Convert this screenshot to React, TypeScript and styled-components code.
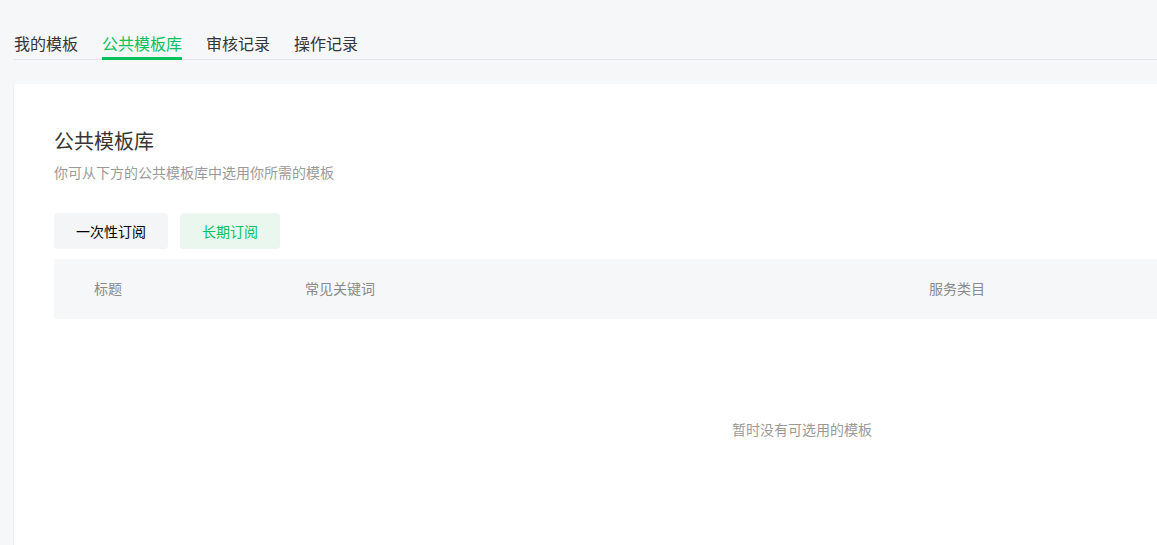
import React, { useState } from "react";
import styled, { createGlobalStyle } from "styled-components";

const GlobalStyle = createGlobalStyle`
  html, body {
    margin: 0;
    padding: 0;
    background: #f6f7f9;
    overflow: hidden;
    font-family: "Noto Sans CJK SC", "Noto Sans", sans-serif;
  }
`;

const Page = styled.div`
  display: flex;
  flex-direction: column;
  padding: 0 0 0 14px;
  width: 1576px;
  min-height: 545px;
`;

const PageTitle = styled.h1`
  margin: -25px 0 0;
  height: 28px;
  font-size: 20px;
  line-height: 28px;
  font-weight: 400;
  color: #c4c4c4;
`;

const TabBar = styled.div`
  display: flex;
  gap: 24px;
  margin-top: 28px;
  border-bottom: 1px solid #e2e4e7;
`;

const Tab = styled.div<{ $active?: boolean }>`
  font-size: 16px;
  line-height: 24px;
  padding-bottom: 2px;
  margin-bottom: -1px;
  color: ${(p) => (p.$active ? "#07c160" : "#353535")};
  border-bottom: 3px solid ${(p) => (p.$active ? "#07c160" : "transparent")};
  cursor: pointer;
`;

const Card = styled.div`
  margin-top: 24px;
  background: #ffffff;
  padding: 43px 40px 0;
  flex: 1;
  box-shadow: -1px 0 0 rgba(0, 0, 0, 0.03);
`;

const CardTitle = styled.h2`
  margin: 0;
  font-size: 20px;
  line-height: 28px;
  font-weight: 400;
  color: #353535;
`;

const CardDesc = styled.p`
  margin: 7px 0 0;
  font-size: 14px;
  line-height: 20px;
  color: #9a9a9a;
`;

const Filters = styled.div`
  display: flex;
  gap: 12px;
  margin-top: 31px;
`;

const FilterButton = styled.button<{ $active?: boolean }>`
  height: 36px;
  padding: 0 22px;
  border: none;
  border-radius: 4px;
  font-family: inherit;
  font-size: 14px;
  background: ${(p) => (p.$active ? "#e9f7ee" : "#f4f5f7")};
  color: ${(p) => (p.$active ? "#07c160" : "#000000")};
  cursor: pointer;
`;

const Table = styled.div`
  margin-top: 10px;
  display: flex;
  flex-direction: column;
`;

const HeadRow = styled.div`
  display: grid;
  grid-template-columns: 211px 624px 1fr;
  height: 60px;
  align-items: center;
  background: #f6f7f9;
`;

const HeadCell = styled.div`
  padding: 0 0 2px 40px;
  font-size: 14px;
  color: #8a8a8a;
`;

const Empty = styled.div`
  height: 220px;
  display: flex;
  align-items: center;
  justify-content: center;
  font-size: 14px;
  color: #999999;
`;

const tabs = ["我的模板", "公共模板库", "审核记录", "操作记录"];

export default function App() {
  const [tab, setTab] = useState(1);
  const [kind, setKind] = useState(1);

  return (
    <>
      <GlobalStyle />
      <Page>
        <PageTitle>订阅消息</PageTitle>
        <TabBar>
          {tabs.map((t, i) => (
            <Tab key={t} $active={i === tab} onClick={() => setTab(i)}>
              {t}
            </Tab>
          ))}
        </TabBar>
        <Card>
          <CardTitle>公共模板库</CardTitle>
          <CardDesc>你可从下方的公共模板库中选用你所需的模板</CardDesc>
          <Filters>
            <FilterButton $active={kind === 0} onClick={() => setKind(0)}>
              一次性订阅
            </FilterButton>
            <FilterButton $active={kind === 1} onClick={() => setKind(1)}>
              长期订阅
            </FilterButton>
          </Filters>
          <Table>
            <HeadRow>
              <HeadCell>标题</HeadCell>
              <HeadCell>常见关键词</HeadCell>
              <HeadCell>服务类目</HeadCell>
            </HeadRow>
            <Empty>暂时没有可选用的模板</Empty>
          </Table>
        </Card>
      </Page>
    </>
  );
}
